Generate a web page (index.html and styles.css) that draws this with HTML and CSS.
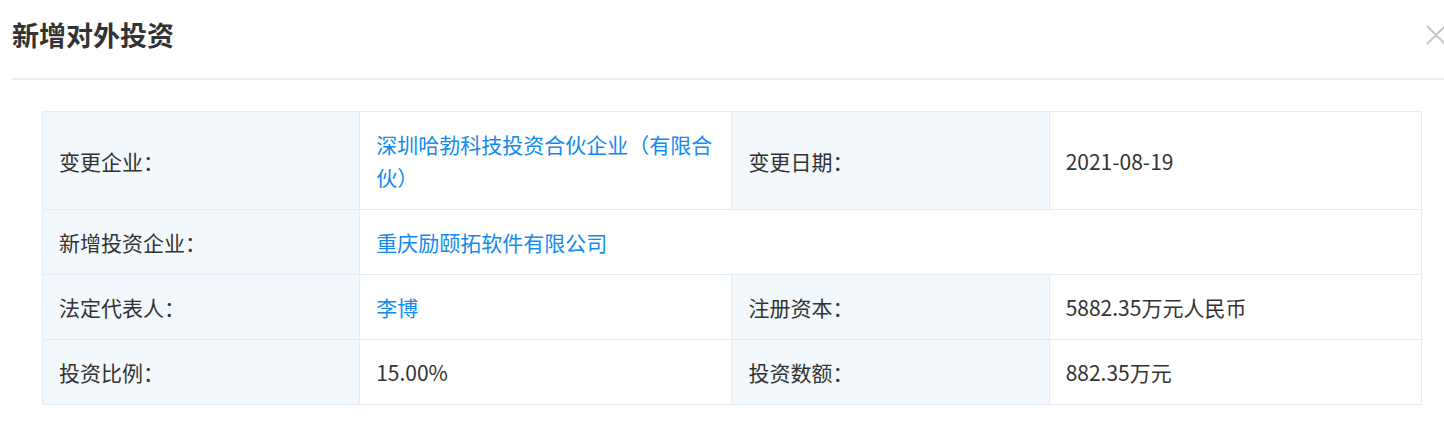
FILE: index.html
```html
<!DOCTYPE html>
<html lang="zh-CN">
<head>
<meta charset="utf-8">
<title>新增对外投资</title>
<link rel="stylesheet" href="styles.css">
</head>
<body>
<div class="dialog">
  <div class="header">
    <h1 class="title">新增对外投资</h1>
    <svg class="close" width="18" height="20" viewBox="0 0 18 20" aria-label="关闭"><path d="M1 1 L19 19 M19 1 L1 19" stroke="#c8c8c8" stroke-width="2" fill="none"/></svg>
  </div>
  <table class="info">
    <colgroup><col class="c-label"><col class="c-value"><col class="c-label"><col class="c-value"></colgroup>
    <tr>
      <td class="label">变更企业：</td>
      <td class="value"><a class="link">深圳哈勃科技投资合伙企业（有限合伙）</a></td>
      <td class="label">变更日期：</td>
      <td class="value">2021-08-19</td>
    </tr>
    <tr>
      <td class="label">新增投资企业：</td>
      <td class="value" colspan="3"><a class="link">重庆励颐拓软件有限公司</a></td>
    </tr>
    <tr>
      <td class="label">法定代表人：</td>
      <td class="value"><a class="link">李博</a></td>
      <td class="label">注册资本：</td>
      <td class="value">5882.35万元人民币</td>
    </tr>
    <tr>
      <td class="label">投资比例：</td>
      <td class="value">15.00%</td>
      <td class="label">投资数额：</td>
      <td class="value">882.35万元</td>
    </tr>
  </table>
</div>
</body>
</html>
```

FILE: styles.css
```css
html, body {
  margin: 0;
  padding: 0;
  background: #fff;
}
body {
  font-family: "Noto Sans CJK SC", "Noto Sans", sans-serif;
  color: #333;
  overflow: hidden;
}
.dialog {
  padding-left: 12px;
}
.header {
  display: flex;
  justify-content: space-between;
  align-items: flex-start;
  height: 78px;
  border-bottom: 2px solid #ececec;
}
.title {
  margin: 20px 0 0 0;
  font-size: 27px;
  line-height: 30px;
  font-weight: bold;
  color: #333;
}
.close {
  margin-top: 25px;
  display: block;
}
.info {
  margin: 31px 0 0 30px;
  width: 1380px;
  table-layout: fixed;
  border-collapse: collapse;
  font-size: 21px;
  line-height: 33px;
}
.c-label { width: 23%; }
.c-value { width: 27%; }
.info td {
  border: 1px solid #e3ecf5;
  padding: 16px 16px 15px 16px;
  vertical-align: middle;
  word-break: break-all;
}
.label {
  background: #f2f8fc;
  color: #333;
}
.value {
  background: #fff;
  color: #333;
}
.link {
  color: #128bed;
  text-decoration: none;
}
```
